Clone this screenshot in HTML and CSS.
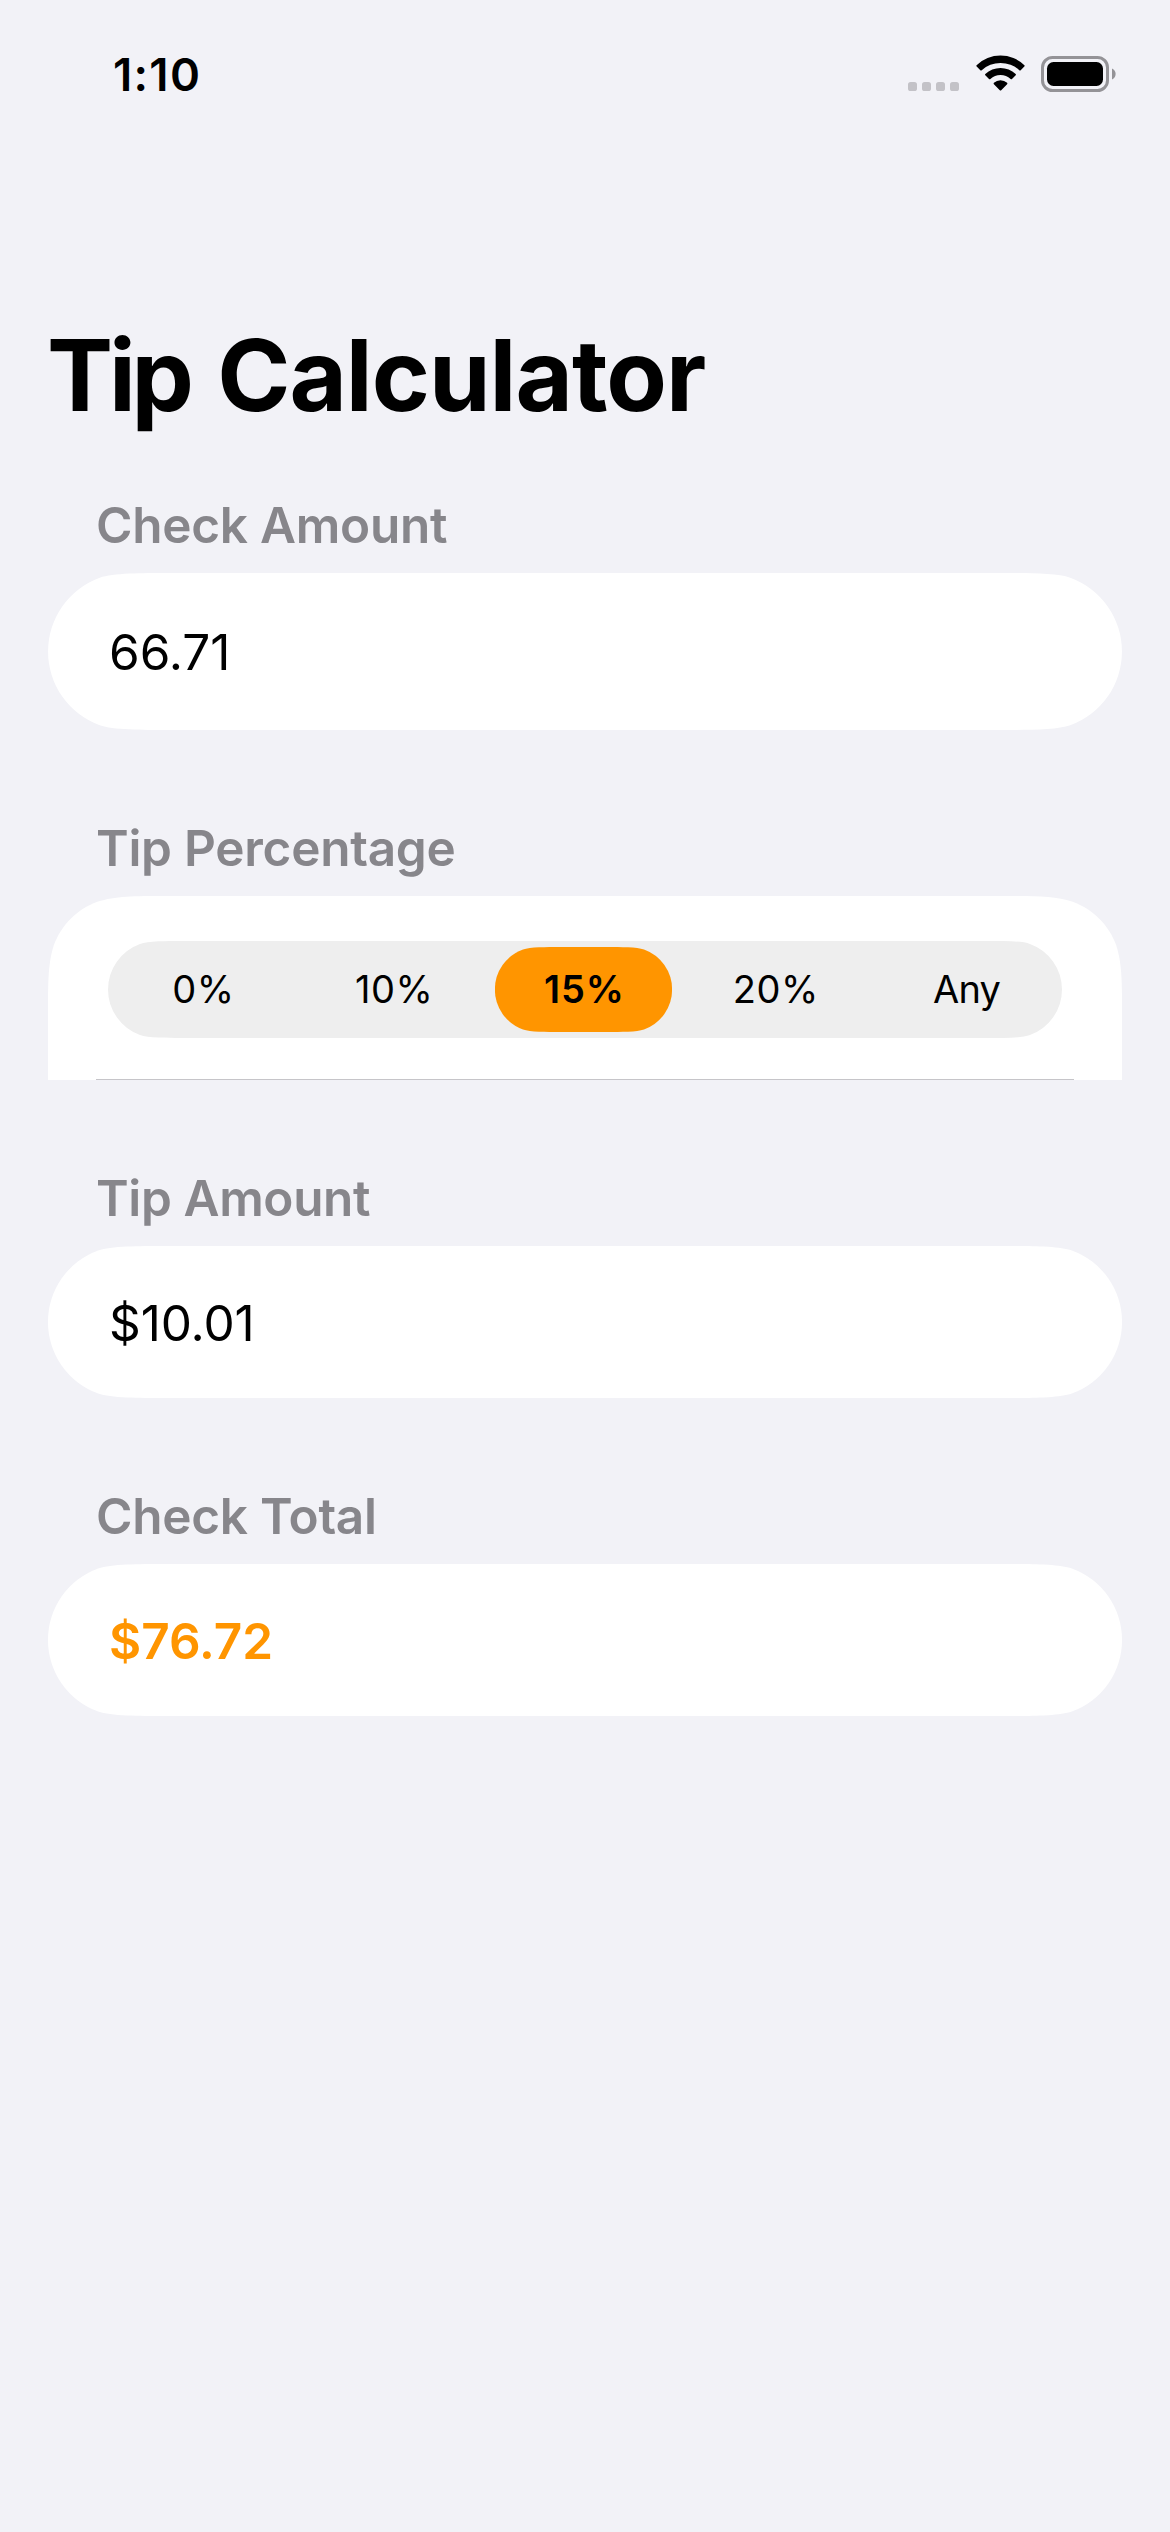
FILE: index.html
```html
<!DOCTYPE html>
<html lang="en">
<head>
<meta charset="utf-8">
<title>Tip Calculator</title>
<link rel="stylesheet" href="styles.css">
</head>
<body>
<header class="status-bar">
  <span class="time">1:10</span>
  <div class="status-icons">
    <svg class="signal" width="51" height="9" viewBox="0 0 51 9"><g fill="#c3c2c7"><rect width="9" height="9" rx="2.6"/><rect x="14" width="9" height="9" rx="2.6"/><rect x="28" width="9" height="9" rx="2.6"/><rect x="42" width="9" height="9" rx="2.6"/></g></svg>
    <svg class="wifi" width="50" height="36" viewBox="0 0 50 36"><path d="M.6 10.2Q0 10.9.7 11.6L4.3 15.2Q5 15.9 5.7 15.2A27.8 27.8 0 0 1 43.3 15.2Q44 15.9 44.7 15.2L48.3 11.6Q49 10.9 48.4 10.2A34.5 34.5 0 0 0 .6 10.2Z"/><path d="M9.3 19Q8.7 19.7 9.3 20.3L13 24Q13.7 24.6 14.4 24A15 15 0 0 1 34.6 24Q35.3 24.6 36 24L39.7 20.3Q40.3 19.7 39.7 19A22.2 22.2 0 0 0 9.3 19Z"/><path d="M17.9 27.8Q17.2 28.5 17.9 29.2L23.8 35.2Q24.5 35.9 25.2 35.2L31.1 29.2Q31.8 28.5 31.1 27.8A9.8 9.8 0 0 0 17.9 27.8Z"/></svg>
    <svg class="battery" width="75" height="36" viewBox="0 0 75 36"><rect x="1.5" y="1.5" width="65" height="33" rx="10" fill="none" stroke="#949397" stroke-width="3"/><rect x="6" y="6" width="56" height="24" rx="6.5"/><path d="M71 12.5A6 6 0 0 1 71 23.5Z" fill="#949397"/></svg>
  </div>
</header>
<main class="page">
  <h1 class="title"><span class="title-lead">Tip</span> Calculator</h1>
  <section class="section">
    <h2 class="label label-check">Check Amount</h2>
    <div class="card card-input"><span class="value value-check">66.71</span></div>
  </section>
  <section class="section">
    <h2 class="label label-percent">Tip Percentage</h2>
    <div class="card card-picker">
      <div class="segments">
        <span class="segment">0%</span>
        <span class="segment">10%</span>
        <span class="segment selected">15%</span>
        <span class="segment">20%</span>
        <span class="segment any">Any</span>
      </div>
      <div class="separator"></div>
    </div>
  </section>
  <section class="section">
    <h2 class="label label-tip">Tip Amount</h2>
    <div class="card card-result"><span class="value value-tip">$10.01</span></div>
  </section>
  <section class="section">
    <h2 class="label label-total">Check Total</h2>
    <div class="card card-result"><span class="value value-total">$76.72</span></div>
  </section>
</main>
</body>
</html>
```

FILE: styles.css
```css
* {
  box-sizing: border-box;
}

body {
  margin: 0;
  min-height: 2532px;
  background: #f2f2f7;
  color: #000;
  font-family: Inter, "Liberation Sans", sans-serif;
}

.status-bar {
  display: flex;
  justify-content: space-between;
  height: 141px;
  padding: 0 54px 0 113px;
}

.time {
  padding-top: 45px;
  font-size: 45.5px;
  font-weight: 600;
  line-height: 60px;
  letter-spacing: 1.3px;
}

.status-icons {
  display: flex;
  align-items: flex-end;
  height: 92px;
}

.signal {
  margin: 0 17px 1px 0;
}

.wifi {
  margin: 0 15px 1px 0;
}

.page {
  padding: 174px 48px 0;
}

.title {
  margin: 0 0 60px -1px;
  font-size: 99px;
  font-weight: 700;
  line-height: 120px;
  letter-spacing: -1px;
  word-spacing: 5px;
}

.title-lead {
  letter-spacing: -4.2px;
}

.section {
  margin-bottom: 88px;
}

.label {
  margin: 0 0 18px 48px;
  color: #87868b;
  font-size: 49.5px;
  font-weight: 600;
  line-height: 60px;
  letter-spacing: -0.26px;
}

.label-tip {
  letter-spacing: -0.37px;
}

.card {
  display: flex;
  align-items: center;
  background: #fff;
}

/* Capsules with continuous-curvature corners */
.card-input {
  height: 157px;
  padding-left: 61px;
  clip-path: path("M120 0H954C979.8 0 1009.2 0 1022.2 4.7A78.5 78.5 0 0 1 1022.2 152.3C1009.2 157 979.8 157 954 157H120C94.2 157 64.8 157 51.8 152.3A78.5 78.5 0 0 1 51.8 4.7C64.8 0 94.2 0 120 0Z");
}

.card-result {
  height: 152px;
  padding: 2px 0 0 61px;
  clip-path: path("M116.2 0H957.8C982.8 0 1011.3 0 1023.8 4.5A76 76 0 0 1 1023.8 147.5C1011.3 152 982.8 152 957.8 152H116.2C91.2 152 62.7 152 50.2 147.5A76 76 0 0 1 50.2 4.5C62.7 0 91.2 0 116.2 0Z");
}

.card-picker {
  flex-direction: column;
  justify-content: space-between;
  height: 184px;
  padding-top: 45px;
  clip-path: path("M119.2 0H954.8C989.1 0 1006.3 0 1024.7 5.8C1044.9 13.2 1060.8 29.1 1068.2 49.3C1074 67.7 1074 84.9 1074 119.2V184H0V119.2C0 84.9 0 67.7 5.8 49.3C13.2 29.1 29.1 13.2 49.3 5.8C67.7 0 84.9 0 119.2 0Z");
}

.segments {
  display: grid;
  grid-template-columns: repeat(5, 1fr);
  align-items: center;
  width: 954px;
  height: 97px;
  background: #eee;
  clip-path: path("M74.1 0H879.9C895.8 0 914 0 922 2.9A48.5 48.5 0 0 1 922 94.1C914 97 895.8 97 879.9 97H74.1C58.2 97 40 97 32 94.1A48.5 48.5 0 0 1 32 2.9C40 0 58.2 0 74.1 0Z");
}

.segment {
  justify-self: center;
  width: 177px;
  height: 85px;
  font-size: 38px;
  line-height: 85px;
  letter-spacing: 0.6px;
  text-align: center;
}

.selected {
  margin-right: 3px;
  background: #ff9500;
  font-weight: 600;
  letter-spacing: 1px;
  text-indent: 2px;
  clip-path: path("M65 0H112C126 0 141.9 0 149 2.5A42.5 42.5 0 0 1 149 82.5C141.9 85 126 85 112 85H65C51 85 35.1 85 28 82.5A42.5 42.5 0 0 1 28 2.5C35.1 0 51 0 65 0Z");
}

.any {
  letter-spacing: -0.8px;
}

.separator {
  width: 978px;
  height: 1px;
  background: #c6c5c9;
}

.value {
  font-size: 49.5px;
  line-height: 60px;
}

.value-tip {
  letter-spacing: -0.1px;
}

.value-total {
  color: #ff9500;
  font-weight: 600;
}
```
